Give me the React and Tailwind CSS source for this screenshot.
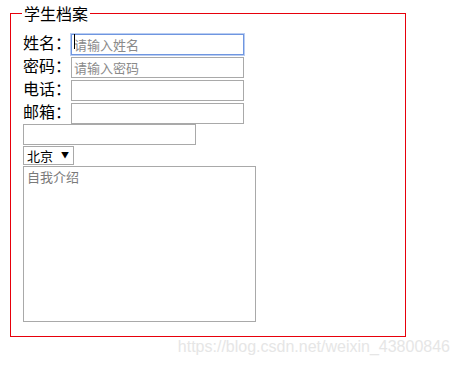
import { useState } from 'react';

const cjk = { fontFamily: '"Noto Sans CJK SC", "Microsoft YaHei", sans-serif' };

function Field({ label, placeholder, focused, type = 'text', value, onChange }) {
  return (
    <div className="flex h-[21px] items-center">
      <span className="w-[48px] text-[16px] leading-[21px] text-black">{label}</span>
      <div className="relative">
        <input
          type={type}
          value={value}
          onChange={onChange}
          placeholder={placeholder}
          className={
            focused
              ? 'h-[21px] w-[173px] border border-[#6f96e0] px-[2px] text-[13px] text-black outline-none ring-1 ring-[#b9cdf2] placeholder:text-[#8a8a8a]'
              : 'h-[21px] w-[173px] border border-[#a9a9a9] px-[2px] text-[13px] text-black outline-none placeholder:text-[#8a8a8a]'
          }
        />
        {focused && !value ? (
          <span className="pointer-events-none absolute left-[3px] top-[3px] h-[15px] w-px bg-black" />
        ) : null}
      </div>
    </div>
  );
}

export default function App() {
  const [name, setName] = useState('');
  const [pwd, setPwd] = useState('');
  const [tel, setTel] = useState('');
  const [mail, setMail] = useState('');
  const [extra, setExtra] = useState('');
  const [city, setCity] = useState('北京');
  const [intro, setIntro] = useState('');

  return (
    <div lang="zh-CN" className="h-[367px] w-[460px] overflow-hidden bg-white" style={cjk}>
      <fieldset className="ml-[10px] mt-[2px] h-[335px] w-[396px] border border-red-600 pl-[12px] pt-[8px]">
        <legend className="-ml-px px-[2px] text-[16px] leading-[22px] text-black">学生档案</legend>
        <div className="flex flex-col gap-[2px]">
          <Field label="姓名：" placeholder="请输入姓名" focused value={name} onChange={(e) => setName(e.target.value)} />
          <Field label="密码：" placeholder="请输入密码" type="password" value={pwd} onChange={(e) => setPwd(e.target.value)} />
          <Field label="电话：" value={tel} onChange={(e) => setTel(e.target.value)} />
          <Field label="邮箱：" value={mail} onChange={(e) => setMail(e.target.value)} />
          <input
            value={extra}
            onChange={(e) => setExtra(e.target.value)}
            className="h-[21px] w-[173px] border border-[#a9a9a9] px-[2px] text-[13px] outline-none"
          />
        </div>
        <div className="relative mt-[1px] w-[51px]">
          <select
            value={city}
            onChange={(e) => setCity(e.target.value)}
            className="block h-[19px] w-[51px] appearance-none border border-[#a9a9a9] pl-[3px] text-[13px] leading-[17px] text-black outline-none"
          >
            <option>北京</option>
            <option>上海</option>
            <option>广州</option>
          </select>
          <span className="pointer-events-none absolute right-[5px] top-[4px] text-[8px] leading-[10px] text-black">▼</span>
        </div>
        <textarea
          value={intro}
          onChange={(e) => setIntro(e.target.value)}
          placeholder="自我介绍"
          className="mt-[1px] block h-[156px] w-[233px] resize-none border border-[#a9a9a9] px-[3px] py-[2px] text-[13px] leading-[16px] outline-none placeholder:text-[#7a7a7a]"
        />
      </fieldset>
      <div className="flex justify-end pr-[10px] pt-[1px]">
        <span className="text-[16px] leading-[18px] text-[#e6e6e6]" style={{ fontFamily: '"Liberation Sans", Arial, sans-serif' }}>
          https://blog.csdn.net/weixin_43800846
        </span>
      </div>
    </div>
  );
}
